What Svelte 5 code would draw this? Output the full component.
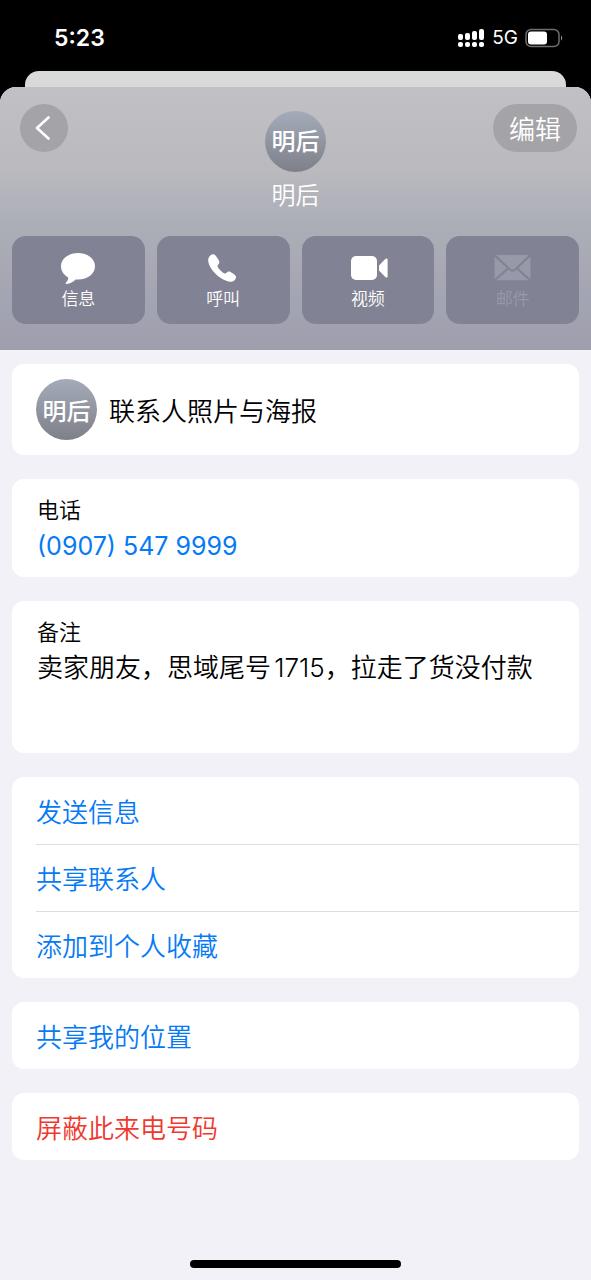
<script>
  const contact = {
    name: '明后',
    phone: '(0907) 547 9999',
    tel: '09075479999',
  }

  let note = $state('卖家朋友，思域尾号1715，拉走了货没付款')

  const shortcuts = [
    { id: 'message', label: '信息' },
    { id: 'call', label: '呼叫' },
    { id: 'video', label: '视频' },
    { id: 'mail', label: '邮件', disabled: true },
  ]

  const groups = [
    { items: ['发送信息', '共享联系人', '添加到个人收藏'] },
    { items: ['共享我的位置'] },
    { items: ['屏蔽此来电号码'], danger: true },
  ]
</script>

<div class="screen">
  <div class="status">
    <span class="time">5:23</span>
    <div class="indicators">
      <svg width="27" height="20" viewBox="0 0 27 20" fill="#fff">
        <rect x="0" y="6" width="5" height="6" rx="2" />
        <rect x="7" y="5" width="5" height="7" rx="2" />
        <rect x="14" y="3" width="5" height="9" rx="2" />
        <rect x="21" y="1" width="5" height="11" rx="2" />
        <rect x="0" y="14" width="5" height="5" rx="2" />
        <rect x="7" y="14" width="5" height="5" rx="2" />
        <rect x="14" y="14" width="5" height="5" rx="2" />
        <rect x="21" y="14" width="5" height="5" rx="2" />
      </svg>
      <span class="network">5G</span>
      <svg width="38" height="20" viewBox="0 0 38 20">
        <rect x="1" y="1.5" width="33" height="17" rx="5" fill="none" stroke="#6e6e6e" stroke-width="1.5" />
        <rect x="3" y="3.5" width="19" height="13" rx="3" fill="#fff" />
        <path d="M36 7.5c1.6.6 1.6 4.4 0 5z" fill="#8a8a8a" />
      </svg>
    </div>
  </div>

  <div class="back-sheet"></div>

  <main>
    <header>
      <div class="topbar">
        <button class="round" aria-label="返回">
          <svg width="16" height="26" viewBox="0 0 16 26" fill="none" stroke="#fff" stroke-width="2.6" stroke-linecap="round" stroke-linejoin="round">
            <path d="M14.5 2.5 3 13l11.5 10.5" />
          </svg>
        </button>
        <div class="identity">
          <span class="avatar">{contact.name}</span>
          <h1>{contact.name}</h1>
        </div>
        <button class="edit">编辑</button>
      </div>

      <div class="shortcuts">
        {#each shortcuts as s}
          <button class="shortcut" disabled={s.disabled}>
            <svg width="40" height="34" viewBox="0 0 40 34" fill="currentColor">
              {#if s.id === 'message'}
                <path d="M20 2C10.300 2 3 8 3 15.300c0 4.800 2.900 8.700 7.200 11.100.3 1.900-.9 3.700-2.300 5.300-.6.800-.1 1.500.8 1.400 3.500-.3 6.500-2.200 8.900-4.600.8.1 1.600.1 2.400.1 9.700 0 17-5.900 17-13.300S29.700 2 20 2z" />
              {:else if s.id === 'call'}
                <path d="M7.300 4.600c1.900-1.900 4.100-1.700 5.600.3 1.300 1.700 2.500 3.500 3.100 4.800.7 1.600.3 2.700-.7 3.800-.9 1-1 1.700-.4 2.700 1.500 2.400 3.600 4.500 6 6 1 .6 1.700.5 2.600-.4 1.200-1.200 2.400-1.600 4-.8 1.600.9 3.400 2 4.600 3.200 1.500 1.500 1.200 3.200-.3 4.700-1.900 1.900-4.500 2.400-7.900 1.200-4.200-1.500-8.300-4.300-11.700-7.700-3.400-3.400-5.900-7.100-6.800-11.100-.6-2.700.1-4.900 1.900-6.700z" />
              {:else if s.id === 'video'}
                <rect x="3" y="5" width="26" height="24" rx="5" />
                <path d="M31 14.400 37.300 8c1.100-1 2.300-.6 2.300.8v16.400c0 1.400-1.200 1.800-2.300.8L31 19.600z" />
              {:else}
                <path d="M3.100 4h32.800L21.300 17.900c-1.200 1.100-2.400 1.100-3.600 0z" />
                <path d="M1.500 5.700 13.800 17 1.500 27.900z" />
                <path d="M37.500 5.700 25.200 17l12.300 10.900z" />
                <path d="M3.100 29.300 15.500 18.500l1 .9c1.900 1.700 4.100 1.700 6 0l1-.9 12.400 10.800z" />
              {/if}
            </svg>
            <span>{s.label}</span>
          </button>
        {/each}
      </div>
    </header>

    <div class="cards">
      <button class="card poster">
        <span class="avatar">{contact.name}</span>
        <span>联系人照片与海报</span>
      </button>

      <section class="card field">
        <span class="label">电话</span>
        <a href="tel:{contact.tel}">{contact.phone}</a>
      </section>

      <section class="card field">
        <label class="label" for="note">备注</label>
        <textarea id="note" rows="2" bind:value={note}></textarea>
      </section>

      {#each groups as group}
        <section class="card" class:danger={group.danger}>
          {#each group.items as item}
            <button class="action">{item}</button>
          {/each}
        </section>
      {/each}
    </div>

    <div class="home-indicator"></div>
  </main>
</div>

<style>
  :global(*, *::before, *::after) {
    box-sizing: border-box;
  }

  :global(body) {
    margin: 0;
    background: #000;
  }

  button,
  textarea {
    margin: 0;
    padding: 0;
    border: none;
    background: none;
    color: inherit;
    font: inherit;
  }

  button {
    cursor: pointer;
  }

  .screen {
    display: flex;
    flex-direction: column;
    min-height: 100vh;
    background: #000;
    color: #000;
    font-family: Inter, 'Noto Sans CJK SC', sans-serif;
    font-size: 26px;
    font-weight: 350;
    line-height: 36px;
  }

  .status {
    display: flex;
    justify-content: space-between;
    align-items: center;
    height: 71px;
    padding: 4px 28px 0 54px;
    color: #fff;
  }

  .time {
    font-size: 23px;
    font-weight: 600;
    line-height: 28px;
  }

  .indicators {
    display: flex;
    align-items: center;
    gap: 7px;
  }

  .network {
    font-size: 19px;
    font-weight: 400;
    line-height: 20px;
  }

  .back-sheet {
    height: 32px;
    margin: 0 25px -16px;
    border-radius: 14px 14px 0 0;
    background: #d8d9d9;
  }

  main {
    flex: 1;
    display: flex;
    flex-direction: column;
    overflow: hidden;
    border-radius: 16px 16px 0 0;
    background: #f2f1f7;
  }

  header {
    padding: 17px 12px 26px;
    background: linear-gradient(#c1c1c5, #b9b9be 32%, #acaeb7 52%, #9e9eae);
  }

  .topbar {
    display: grid;
    grid-template-columns: 1fr auto 1fr;
    align-items: start;
    color: #fff;
  }

  .round,
  .edit {
    display: flex;
    align-items: center;
    justify-content: center;
    height: 48px;
    border-radius: 24px;
    background: #a3a3a8;
  }

  .round {
    width: 48px;
    margin-left: 8px;
    padding-right: 4px;
  }

  .edit {
    justify-self: end;
    margin-right: 2px;
    padding: 0 16px;
  }

  .edit,
  .poster,
  .action {
    font-family: 'Noto Sans CJK SC', sans-serif;
  }

  .identity {
    display: flex;
    flex-direction: column;
    align-items: center;
    gap: 6px;
    padding-top: 7px;
  }

  .avatar {
    display: flex;
    align-items: center;
    justify-content: center;
    width: 61px;
    height: 61px;
    border-radius: 50%;
    background: linear-gradient(#a4abb9, #7e8089);
    color: #fff;
    font-size: 24px;
    font-weight: 500;
  }

  h1 {
    margin: 0;
    font-size: 24px;
    font-weight: 350;
    line-height: 36px;
  }

  .shortcuts {
    display: grid;
    grid-template-columns: repeat(4, 1fr);
    gap: 12px;
    margin-top: 22px;
  }

  .shortcut {
    display: flex;
    flex-direction: column;
    align-items: center;
    height: 88px;
    padding-top: 15px;
    border-radius: 14px;
    background: #818293;
    color: #fff;
    font-size: 17px;
    line-height: 28px;
  }

  .shortcut:disabled {
    color: #9899a8;
    cursor: default;
  }

  .cards {
    display: flex;
    flex-direction: column;
    gap: 24px;
    padding: 14px 12px;
  }

  .card {
    border-radius: 12px;
    background: #fff;
    overflow: hidden;
  }

  .poster {
    display: flex;
    align-items: center;
    gap: 12px;
    padding: 15px 24px;
    text-align: left;
  }

  .field {
    display: flex;
    flex-direction: column;
    padding: 13px 25px;
  }

  .label {
    font-size: 22px;
  }

  .field a {
    color: #067af5;
    font-size: 25px;
    font-weight: 400;
    text-decoration: none;
  }

  textarea {
    display: block;
    width: 100%;
    padding-bottom: 18px;
    box-sizing: content-box;
    resize: none;
    outline: none;
    overflow: hidden;
    text-autospace: normal;
  }

  .action {
    display: block;
    width: calc(100% - 24px);
    height: 67px;
    margin-left: 24px;
    color: #067af5;
    text-align: left;
  }

  .action + .action {
    border-top: 1px solid #dededf;
  }

  .danger .action {
    color: #f0382e;
  }

  .home-indicator {
    width: 211px;
    height: 8px;
    margin: auto auto 12px;
    border-radius: 4px;
    background: #000;
  }
</style>
